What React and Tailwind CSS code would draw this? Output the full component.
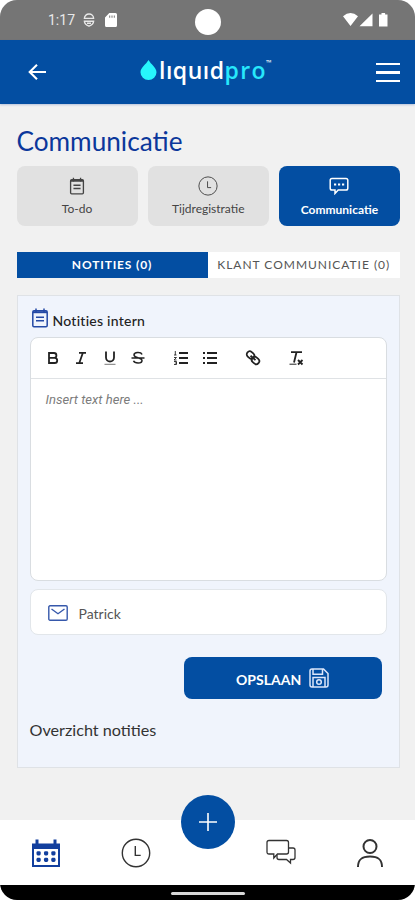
import React from 'react';

const NoteIcon = ({ className }) => (
    <svg viewBox="0 0 18 20" className={className} fill="none" stroke="currentColor" strokeWidth="1.5">
        <rect x="1.8" y="2.8" width="14.4" height="16" rx="1.2" />
        <path d="M2 4.2h14" strokeWidth="2" />
        <path d="M5 .6v4.4M13 .6v4.4M5 9.2h8M5 12.8h8" />
    </svg>
);

const ClockIcon = ({ className }) => (
    <svg viewBox="0 0 30 30" className={className} fill="none" stroke="currentColor" strokeWidth="1.4">
        <circle cx="15" cy="15" r="13.7" />
        <path d="M14.3 8v9.4h5.4" />
    </svg>
);

const ToolIcon = ({ className = '', children }) => (
    <svg viewBox="0 0 18 18" className={`h-[18px] w-[18px] shrink-0 ${className}`} fill="none" stroke="#222" strokeWidth="1.8">
        {children}
    </svg>
);

const StatusBar = () => (
    <div className="flex h-10 shrink-0 items-center bg-[#757575] pr-[26px] pl-12 text-white">
        <span className="w-[27px] font-['Roboto',sans-serif] text-[14px] leading-none text-[#e8e8e8]">1:17</span>
        <svg viewBox="0 0 12 14" className="ml-[8px] h-[14px] w-3" fill="none" stroke="#e8e8e8" strokeWidth="1.4">
            <path d="M1.4 5.4A4.6 4.4 0 0 1 10.6 5.4zM1.4 8.2h9.2Q10.5 11.5 6 13.2 1.5 11.5 1.4 8.2zM4 10.3h4" />
        </svg>
        <svg viewBox="0 0 12 14" className="ml-[10px] h-[14px] w-3" fill="currentColor">
            <path fillRule="evenodd" d="M4.3 0H10.5Q12 0 12 1.5V12.5Q12 14 10.5 14H1.5Q0 14 0 12.5V4.5zM4.2 2.5v2.2h1V2.5zM6.5 2.5v2.2h1V2.5zM8.8 2.5v2.2h1V2.5z" />
        </svg>
        <span className="mt-[3px] ml-[78px] h-[26px] w-[26px] rounded-full bg-white" />
        <svg viewBox="0 0 46 14" className="ml-auto h-[14px] w-[46px]" fill="currentColor">
            <path d="M0 3.2Q7.5-3 15 3.2L7.5 13zM16.5 13.3 29.5.6v12.7zM38.5 0h3.6v1.4h2.4v12.1H36V1.4h2.5z" />
        </svg>
    </div>
);

const Header = () => (
    <header className="flex h-16 shrink-0 items-center bg-[#034ea2] pr-[15px] pl-[28px] text-white shadow-[0_1px_2px_rgba(3,50,150,0.25)]">
        <svg viewBox="0 0 18 16" className="h-4 w-[18px]" fill="none" stroke="currentColor" strokeWidth="2.1">
            <path d="M9 .8 1.7 8 9 15.2M1.8 8H18" />
        </svg>
        <div className="-mt-[5px] ml-[94px] flex h-8 items-center">
            <svg viewBox="0 0 17 20" className="mt-[1px] h-5 w-[17px]" fill="#27f5fc">
                <path d="M8.5 0C11 4.5 16.5 7.5 16.5 12.2A8 7.7 0 0 1 .5 12.2C.5 7.5 6 4.5 8.5 0z" />
            </svg>
            <span className="ml-[2px] flex w-[108px] font-['Open_Sans',sans-serif] text-[23px] leading-8 font-semibold tracking-[0.5px]">
                lıquıd<span className="tracking-[1.4px] text-[#27e8fc]">pro</span>
            </span>
            <span className="mb-[15px] -ml-[1px] font-['Open_Sans',sans-serif] text-[7px] leading-none font-bold">™</span>
        </div>
        <div className="mt-[1px] ml-auto flex w-6 flex-col gap-[6px]">
            <span className="h-[2.5px] bg-white" />
            <span className="h-[2.5px] bg-white" />
            <span className="h-[2.5px] bg-white" />
        </div>
    </header>
);

const Shortcut = ({ active, label, children }) => (
    <div className={`flex h-[60px] flex-col items-center rounded-[8px] pt-[10px] text-[12px] ${active ? 'bg-[#034ea2] font-bold text-white' : 'bg-[#e1e1e1] text-[#444]'}`}>
        <div className="flex h-5 items-center">{children}</div>
        <span className={`leading-[16px] whitespace-nowrap ${active ? 'mt-[6px]' : 'mt-[5px]'}`}>{label}</span>
    </div>
);

const Editor = () => (
    <div className="h-[244px] rounded-[8px] border border-[#d9dde1] bg-white">
        <div className="flex h-[41px] items-center border-b border-[#dfe2e5] pl-[13px]">
            <ToolIcon><path d="M5 4h5a2.3 2.3 0 0 1 0 4.8H5zM5 8.8h5.6a2.6 2.6 0 0 1 0 5.2H5z" /></ToolIcon>
            <ToolIcon className="ml-[10px]"><path d="M7 3.8h7M4 14.2h7M10.8 4 7.3 14" /></ToolIcon>
            <ToolIcon className="ml-[11px]">
                <path d="M5 2.5v6a4 4 0 0 0 8 0v-6" />
                <path d="M3.5 15.3h11" stroke="#777" strokeWidth="1" />
            </ToolIcon>
            <ToolIcon className="ml-[10px]"><path d="M13 5.5C12 2.8 5 2.8 5 6c0 3.2 8 2.2 8 5.5 0 3.300-7.300 3.300-8.500.2M2.500 9h13" strokeWidth="1.5" /></ToolIcon>
            <ToolIcon className="ml-[25px]">
                <path d="M7 4h9M7 9h9M7 14h9" />
                <path d="M3.3 2v4M2 6h2.5M2 8.5h2.5L2 11h2.5M2 12.5h2.5v3H2M2.8 14h1.5" strokeWidth=".9" />
            </ToolIcon>
            <ToolIcon className="ml-[11px]"><path d="M6 4h10M6 9h10M6 14h10M2 4h2M2 9h2M2 14h2" /></ToolIcon>
            <ToolIcon className="ml-[25px]">
                <rect x="2.5" y="3" width="8" height="6" rx="3" transform="rotate(42 6.5 6)" />
                <rect x="7.5" y="8.5" width="8" height="6" rx="3" transform="rotate(42 11.5 11.5)" />
                <path d="m6.5 6.7 5 4.4" />
            </ToolIcon>
            <ToolIcon className="ml-[25px]">
                <path d="M4 3.2h11M9.5 3.2 7 13.5" />
                <path d="M2.5 15.2h7" strokeWidth="1" />
                <path d="m11 11 4.5 4.5M15.5 11 11 15.5" />
            </ToolIcon>
        </div>
        <div className="pt-[13px] pl-[15px] font-['Roboto',sans-serif] text-[13px] leading-4 tracking-[0.03px] text-[#7c7c7c] italic">Insert text here ...</div>
    </div>
);

const BottomNav = () => (
    <nav className="relative flex h-[65px] shrink-0 items-center bg-white text-[#333]">
        <svg viewBox="0 0 30 28" className="ml-[31px] h-7 w-[30px] text-[#123f9e]" fill="currentColor">
            <path fillRule="evenodd" d="M1 4.5h3.500V.5h3v4h15v-4h3v4H29V28H1zM3 10v16h24V10z" />
            <rect x="5.5" y="12.2" width="4.2" height="4.2" rx="1.4" />
            <rect x="13" y="12.2" width="4.2" height="4.2" rx="1.4" />
            <rect x="20.3" y="12.2" width="4.2" height="4.2" rx="1.4" />
            <rect x="5.5" y="18.8" width="4.2" height="4.2" rx="1.4" />
            <rect x="13" y="18.8" width="4.2" height="4.2" rx="1.4" />
            <rect x="20.3" y="18.8" width="4.2" height="4.2" rx="1.4" />
        </svg>
        <ClockIcon className="ml-[60px] h-[30px] w-[30px]" />
        <svg viewBox="0 0 30 26" className="-mt-[2px] ml-[115px] h-[26px] w-[30px]" fill="none" stroke="currentColor" strokeWidth="1.3">
            <path d="M3 1.5h17.5q2 0 2 2V13q0 2-2 2H11.5L7.8 19V15H3q-2 0-2-2V3.500q0-2 2-2z" />
            <path d="M22.5 9h4.5q2 0 2 2v7.500q0 2-2 2h-2.500V24L20.500 20.500H13q-2 0-2-2v-2.800" />
        </svg>
        <svg viewBox="0 0 28 30" className="ml-[60px] h-[30px] w-7" fill="none" stroke="currentColor" strokeWidth="2">
            <circle cx="14" cy="8.5" r="6.5" />
            <path d="M2 29C2 21 6 18.5 14 18.5S26 21 26 29" />
        </svg>
        <div className="absolute -top-[25px] left-[181px] flex h-[54px] w-[54px] items-center justify-center rounded-full bg-[#034ea2]">
            <svg viewBox="0 0 20 20" className="h-5 w-5" stroke="white" strokeWidth="1.6">
                <path d="M10 1v18M1 10h18" />
            </svg>
        </div>
    </nav>
);

const App = () => (
    <div className="h-[900px] w-[415px] bg-white">
        <div className="flex h-full flex-col overflow-hidden rounded-[17px] bg-[#f1f1f1] font-['Lato',sans-serif]">
            <StatusBar />
            <Header />

            <main className="flex flex-1 flex-col pt-[20px] pr-[15px] pl-[16.5px]">
                <h1 className="h-[42px] text-[26.2px] leading-[35px] text-[#0b379b]">Communicatie</h1>

                <div className="grid grid-cols-3 gap-[10px]">
                    <Shortcut label="To-do"><NoteIcon className="h-[18px] w-4" /></Shortcut>
                    <Shortcut label="Tijdregistratie"><ClockIcon className="h-5 w-5" /></Shortcut>
                    <Shortcut label="Communicatie" active>
                        <svg viewBox="0 0 20 18" className="h-[18px] w-5" fill="none" stroke="currentColor" strokeWidth="1.5">
                            <path d="M3 1.5h14q1.8 0 1.8 1.8v8q0 1.8-1.8 1.8H9.2L6 16.5v-3.400H3q-1.800 0-1.800-1.800v-8Q1.200 1.500 3 1.500z" />
                            <path d="M5 7.5h2.200M9 7.500h2.200M13 7.500h2.200" strokeWidth="2.2" />
                        </svg>
                    </Shortcut>
                </div>

                <div className="mt-[26px] flex h-[26px] text-[12px] leading-[26px] whitespace-nowrap">
                    <div className="w-[191px] bg-[#034ea2] text-center font-bold tracking-[0.85px] text-white">NOTITIES (0)</div>
                    <div className="flex-1 bg-white text-center tracking-[0.98px] text-[#555]">KLANT COMMUNICATIE (0)</div>
                </div>

                <section className="mt-[17px] flex h-[473px] flex-col border border-[#dfe2e6] bg-[#f0f4fc] px-[12px] pt-[12px]">
                    <div className="flex h-[29px] text-[#222]">
                        <NoteIcon className="ml-[1px] h-5 w-[18px] text-[#2449a5]" />
                        <span className="mt-[4px] ml-[4px] text-[14px] leading-[18px] font-medium tracking-[0.25px]">Notities intern</span>
                    </div>
                    <Editor />
                    <div className="mt-[8px] flex h-[46px] items-center rounded-[8px] border border-[#e2e6ea] bg-white pt-[2px] pl-[17px]">
                        <svg viewBox="0 0 20 16" className="h-4 w-5" fill="none" stroke="#3658ab" strokeWidth="1.4">
                            <rect x=".8" y=".8" width="18.4" height="14.4" rx="1.2" />
                            <path d="m3.5 4 6.5 4.7L16.5 4" />
                        </svg>
                        <span className="ml-[11px] text-[14px] text-[#555]">Patrick</span>
                    </div>
                    <button className="mt-[22px] mr-[5px] flex h-[42px] w-[198px] shrink-0 items-center self-end rounded-[8px] bg-[#034ea2] pt-[2px] pl-[52px] text-[14px] font-bold text-white">
                        OPSLAAN
                        <svg viewBox="0 0 20 20" className="-mt-[3px] ml-[8px] h-5 w-5" fill="none" stroke="#dce6fa" strokeWidth="1.5">
                            <path d="M3 1h11.5L19 5.5V17q0 2-2 2H3q-2 0-2-2V3q0-2 2-2zM4 1.500v4.800h9.500V1.500M4 19v-9.500h12V19" />
                            <circle cx="10" cy="14" r="2.3" />
                        </svg>
                    </button>
                    <h2 className="mt-[21px] text-[16.2px] leading-[20px] text-[#333]">Overzicht notities</h2>
                </section>
            </main>

            <BottomNav />
            <div className="flex h-[15px] shrink-0 justify-center bg-black pt-[7px]">
                <span className="h-[3px] w-[74px] rounded-full bg-[#d8d8d8]" />
            </div>
        </div>
    </div>
);

export default App;
